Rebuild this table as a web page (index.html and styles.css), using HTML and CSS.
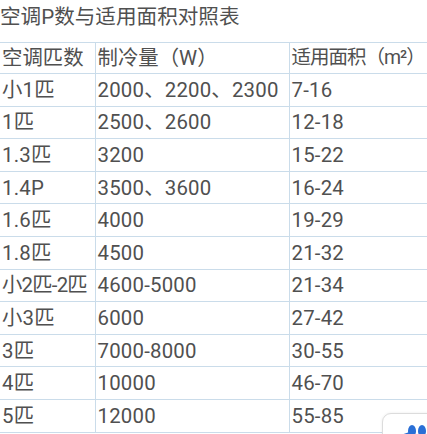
FILE: index.html
```html
<!DOCTYPE html>
<html lang="zh-CN">
<head>
<meta charset="utf-8">
<title>空调P数与适用面积对照表</title>
<link rel="stylesheet" href="styles.css">
</head>
<body>
<div class="page">
  <div class="title">空调P数与适用面积对照表</div>
  <table class="grid">
    <colgroup>
      <col class="c1"><col class="c2"><col class="c3">
    </colgroup>
    <tr class="head"><td>空调匹数</td><td>制冷量（W）</td><td class="area">适用面积（m²）</td></tr>
    <tr><td>小1匹</td><td>2000、2200、2300</td><td>7-16</td></tr>
    <tr><td>1匹</td><td>2500、2600</td><td>12-18</td></tr>
    <tr><td>1.3匹</td><td>3200</td><td>15-22</td></tr>
    <tr><td>1.4P</td><td>3500、3600</td><td>16-24</td></tr>
    <tr><td>1.6匹</td><td>4000</td><td>19-29</td></tr>
    <tr><td>1.8匹</td><td>4500</td><td>21-32</td></tr>
    <tr><td class="tight">小2匹-2匹</td><td>4600-5000</td><td>21-34</td></tr>
    <tr><td>小3匹</td><td>6000</td><td>27-42</td></tr>
    <tr><td>3匹</td><td>7000-8000</td><td>30-55</td></tr>
    <tr><td>4匹</td><td>10000</td><td>46-70</td></tr>
    <tr><td>5匹</td><td>12000</td><td>55-85</td></tr>
  </table>
  <div class="fab">
    <svg class="fab-icon" width="30" height="14" viewBox="0 0 30 14">
      <path d="M6 13 L12 11" stroke="#2a6fd6" stroke-width="1.5" fill="none"/>
      <ellipse cx="15" cy="9" rx="4" ry="6" fill="#2a6fd6"/>
      <ellipse cx="25" cy="9" rx="4" ry="6" fill="#2a6fd6"/>
    </svg>
  </div>
</div>
</body>
</html>
```
FILE: styles.css
```css
html, body {
  margin: 0;
  padding: 0;
  background: #ffffff;
}
.page {
  position: relative;
  width: 427px;
  height: 434px;
  overflow: hidden;
  font-family: Roboto, "Noto Sans CJK SC", sans-serif;
  color: #505050;
}
.title {
  height: 42px;
  line-height: 34px;
  font-size: 20.6px;
  white-space: nowrap;
}
.grid {
  border-collapse: collapse;
  width: 427px;
  table-layout: fixed;
  font-size: 20.4px;
}
.c1 { width: 95px; }
.c2 { width: 194px; }
.c3 { width: 138px; }
.grid td {
  border-top: 1px solid #cadcea;
  border-bottom: 1px solid #cadcea;
  border-left: 1px solid #cadcea;
  padding: 0 0 0 2px;
  height: 31.6px;
  line-height: 28px;
  white-space: nowrap;
  vertical-align: middle;
  letter-spacing: 0.2px;
}
.grid td:first-child {
  border-left: none;
}
.grid tr.head td {
  height: 30px;
  letter-spacing: 0;
}
.grid tr.head td.area {
  font-size: 19.5px;
  letter-spacing: -1px;
}
.grid td.tight {
  letter-spacing: -0.8px;
}
.fab {
  position: absolute;
  left: 382px;
  top: 413px;
  width: 70px;
  height: 40px;
  background: #ffffff;
  border: 1px solid #dcdcdc;
  border-radius: 9px;
  box-shadow: 0 0 3px rgba(0,0,0,0.08);
}
.fab-icon {
  position: absolute;
  left: 14px;
  top: 8px;
}
```
